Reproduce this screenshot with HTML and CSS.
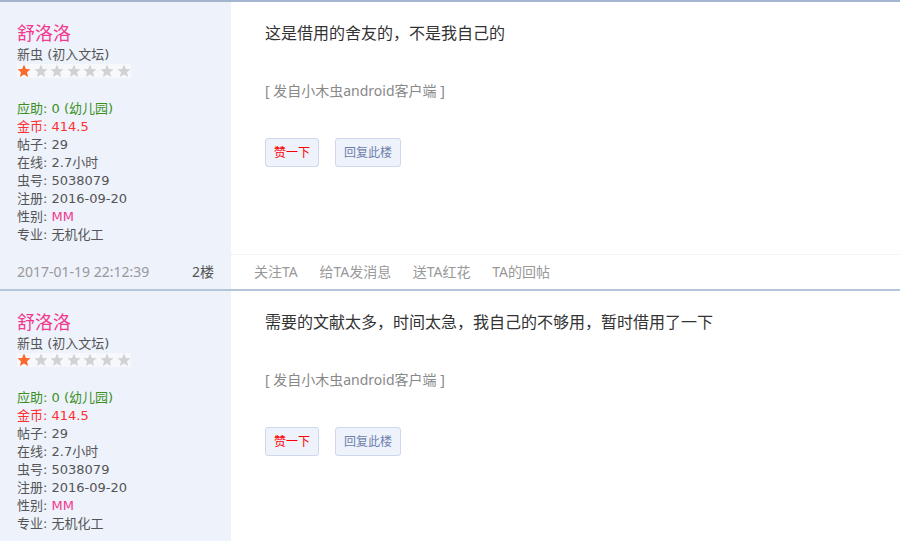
FILE: index.html
```html
<!DOCTYPE html>
<html>
<head>
    <meta charset="utf-8">
    <link rel="stylesheet" href="styles.css">
</head>
<body>

<div class="thread">

    <div class="post">
        <div class="post-main">
            <div class="author">
                <div class="author-name">舒洛洛</div>
                <div class="author-rank">新虫 (初入文坛)</div>
                <div class="stars">
                    <svg class="star on" viewBox="0 0 14 14"><path d="M7 0.6l1.9 4.3 4.6 0.4-3.5 3 1.1 4.6L7 10.5l-4.1 2.4 1.1-4.6-3.5-3 4.6-0.4z"/></svg>
                    <svg class="star" viewBox="0 0 14 14"><path d="M7 0.6l1.9 4.3 4.6 0.4-3.5 3 1.1 4.6L7 10.5l-4.1 2.4 1.1-4.6-3.5-3 4.6-0.4z"/></svg>
                    <svg class="star" viewBox="0 0 14 14"><path d="M7 0.6l1.9 4.3 4.6 0.4-3.5 3 1.1 4.6L7 10.5l-4.1 2.4 1.1-4.6-3.5-3 4.6-0.4z"/></svg>
                    <svg class="star" viewBox="0 0 14 14"><path d="M7 0.6l1.9 4.3 4.6 0.4-3.5 3 1.1 4.6L7 10.5l-4.1 2.4 1.1-4.6-3.5-3 4.6-0.4z"/></svg>
                    <svg class="star" viewBox="0 0 14 14"><path d="M7 0.6l1.9 4.3 4.6 0.4-3.5 3 1.1 4.6L7 10.5l-4.1 2.4 1.1-4.6-3.5-3 4.6-0.4z"/></svg>
                    <svg class="star" viewBox="0 0 14 14"><path d="M7 0.6l1.9 4.3 4.6 0.4-3.5 3 1.1 4.6L7 10.5l-4.1 2.4 1.1-4.6-3.5-3 4.6-0.4z"/></svg>
                    <svg class="star" viewBox="0 0 14 14"><path d="M7 0.6l1.9 4.3 4.6 0.4-3.5 3 1.1 4.6L7 10.5l-4.1 2.4 1.1-4.6-3.5-3 4.6-0.4z"/></svg>
                </div>
                <ul class="author-info">
                    <li class="green">应助: 0 (幼儿园)</li>
                    <li class="red">金币: 414.5</li>
                    <li>帖子: 29</li>
                    <li>在线: 2.7小时</li>
                    <li>虫号: 5038079</li>
                    <li>注册: 2016-09-20</li>
                    <li>性别: <span class="pink">MM</span></li>
                    <li>专业: 无机化工</li>
                </ul>
            </div>
            <div class="content">
                <div class="post-text">这是借用的舍友的，不是我自己的</div>
                <div class="post-source">[ 发自小木虫android客户端 ]</div>
                <div class="post-actions">
                    <a href="#" class="btn btn-like">赞一下</a>
                    <a href="#" class="btn">回复此楼</a>
                </div>
            </div>
        </div>
        <div class="post-foot">
            <div class="foot-left">
                <span class="post-time">2017-01-19 22:12:39</span>
                <span class="floor">2楼</span>
            </div>
            <div class="foot-links">
                <a href="#">关注TA</a>
                <a href="#">给TA发消息</a>
                <a href="#">送TA红花</a>
                <a href="#">TA的回帖</a>
            </div>
        </div>
    </div>

    <div class="post">
        <div class="post-main">
            <div class="author">
                <div class="author-name">舒洛洛</div>
                <div class="author-rank">新虫 (初入文坛)</div>
                <div class="stars">
                    <svg class="star on" viewBox="0 0 14 14"><path d="M7 0.6l1.9 4.3 4.6 0.4-3.5 3 1.1 4.6L7 10.5l-4.1 2.4 1.1-4.6-3.5-3 4.6-0.4z"/></svg>
                    <svg class="star" viewBox="0 0 14 14"><path d="M7 0.6l1.9 4.3 4.6 0.4-3.5 3 1.1 4.6L7 10.5l-4.1 2.4 1.1-4.6-3.5-3 4.6-0.4z"/></svg>
                    <svg class="star" viewBox="0 0 14 14"><path d="M7 0.6l1.9 4.3 4.6 0.4-3.5 3 1.1 4.6L7 10.5l-4.1 2.4 1.1-4.6-3.5-3 4.6-0.4z"/></svg>
                    <svg class="star" viewBox="0 0 14 14"><path d="M7 0.6l1.9 4.3 4.6 0.4-3.5 3 1.1 4.6L7 10.5l-4.1 2.4 1.1-4.6-3.5-3 4.6-0.4z"/></svg>
                    <svg class="star" viewBox="0 0 14 14"><path d="M7 0.6l1.9 4.3 4.6 0.4-3.5 3 1.1 4.6L7 10.5l-4.1 2.4 1.1-4.6-3.5-3 4.6-0.4z"/></svg>
                    <svg class="star" viewBox="0 0 14 14"><path d="M7 0.6l1.9 4.3 4.6 0.4-3.5 3 1.1 4.6L7 10.5l-4.1 2.4 1.1-4.6-3.5-3 4.6-0.4z"/></svg>
                    <svg class="star" viewBox="0 0 14 14"><path d="M7 0.6l1.9 4.3 4.6 0.4-3.5 3 1.1 4.6L7 10.5l-4.1 2.4 1.1-4.6-3.5-3 4.6-0.4z"/></svg>
                </div>
                <ul class="author-info">
                    <li class="green">应助: 0 (幼儿园)</li>
                    <li class="red">金币: 414.5</li>
                    <li>帖子: 29</li>
                    <li>在线: 2.7小时</li>
                    <li>虫号: 5038079</li>
                    <li>注册: 2016-09-20</li>
                    <li>性别: <span class="pink">MM</span></li>
                    <li>专业: 无机化工</li>
                </ul>
            </div>
            <div class="content">
                <div class="post-text">需要的文献太多，时间太急，我自己的不够用，暂时借用了一下</div>
                <div class="post-source">[ 发自小木虫android客户端 ]</div>
                <div class="post-actions">
                    <a href="#" class="btn btn-like">赞一下</a>
                    <a href="#" class="btn">回复此楼</a>
                </div>
            </div>
        </div>
    </div>

</div>

</body>
</html>
```

FILE: styles.css
```css
body {
    margin: 0;
    background-color: #fff;
    font-family: "Noto Sans", "Noto Sans CJK SC", sans-serif;
    color: #444;
}

.thread {
    border-top: 2px solid #a3b5cf;
}

.post {
    border-bottom: 2px solid #b4c6d9;
}

.post-main {
    display: flex;
}

.author {
    width: 214px;
    flex-shrink: 0;
    padding: 19px 0 10px 17px;
    background-color: #edf2fb;
    font-family: "DejaVu Sans", "Noto Sans CJK SC", sans-serif;
    font-size: 13px;
}

.author-name {
    font-family: "Noto Sans", "Noto Sans CJK SC", sans-serif;
    font-size: 18px;
    line-height: 24px;
    color: #f2388f;
}

.author-rank {
    margin-top: 1px;
    line-height: 18px;
    color: #555;
}

.stars {
    display: flex;
    gap: 2.6px;
    width: 114px;
    margin-top: 0;
    background-color: #f6f8fc;
}

.star {
    width: 14px;
    height: 14px;
    fill: #d2d2d2;
}

.star.on {
    fill: #fb6a2d;
}

.author-info {
    list-style-type: none;
    margin: 22px 0 0 0;
    padding: 0;
}

.author-info li {
    line-height: 18px;
    color: #555;
}

.author-info .green {
    color: #3b8f1e;
}

.author-info .red {
    color: #ff3030;
}

.pink {
    color: #f2388f;
}

.content {
    flex: 1;
    padding: 19px 0 0 34px;
}

.post-text {
    font-size: 16px;
    line-height: 24px;
    color: #333;
}

.post-source {
    margin-top: 37px;
    font-size: 14px;
    line-height: 18px;
    color: #888;
}

.post-actions {
    display: flex;
    gap: 16px;
    margin-top: 38px;
}

.btn {
    display: inline-block;
    padding: 0 8px;
    line-height: 27px;
    font-size: 12px;
    color: #6f7fae;
    text-decoration: none;
    background-color: #eef2fa;
    border: 1px solid #cdd8ec;
    border-radius: 3px;
}

.btn-like {
    color: #f00;
}

.post-foot {
    display: flex;
    height: 35px;
    line-height: 35px;
    font-size: 14px;
}

.foot-left {
    width: 197px;
    flex-shrink: 0;
    padding: 0 17px;
    display: flex;
    justify-content: space-between;
    background-color: #edf2fb;
}

.post-time {
    color: #999;
}

.floor {
    color: #555;
}

.foot-links {
    flex: 1;
    padding-left: 23px;
    border-top: 1px dotted #e4e8ee;
    line-height: 34px;
}

.foot-links a {
    margin-right: 18px;
    color: #999;
    text-decoration: none;
}
```
